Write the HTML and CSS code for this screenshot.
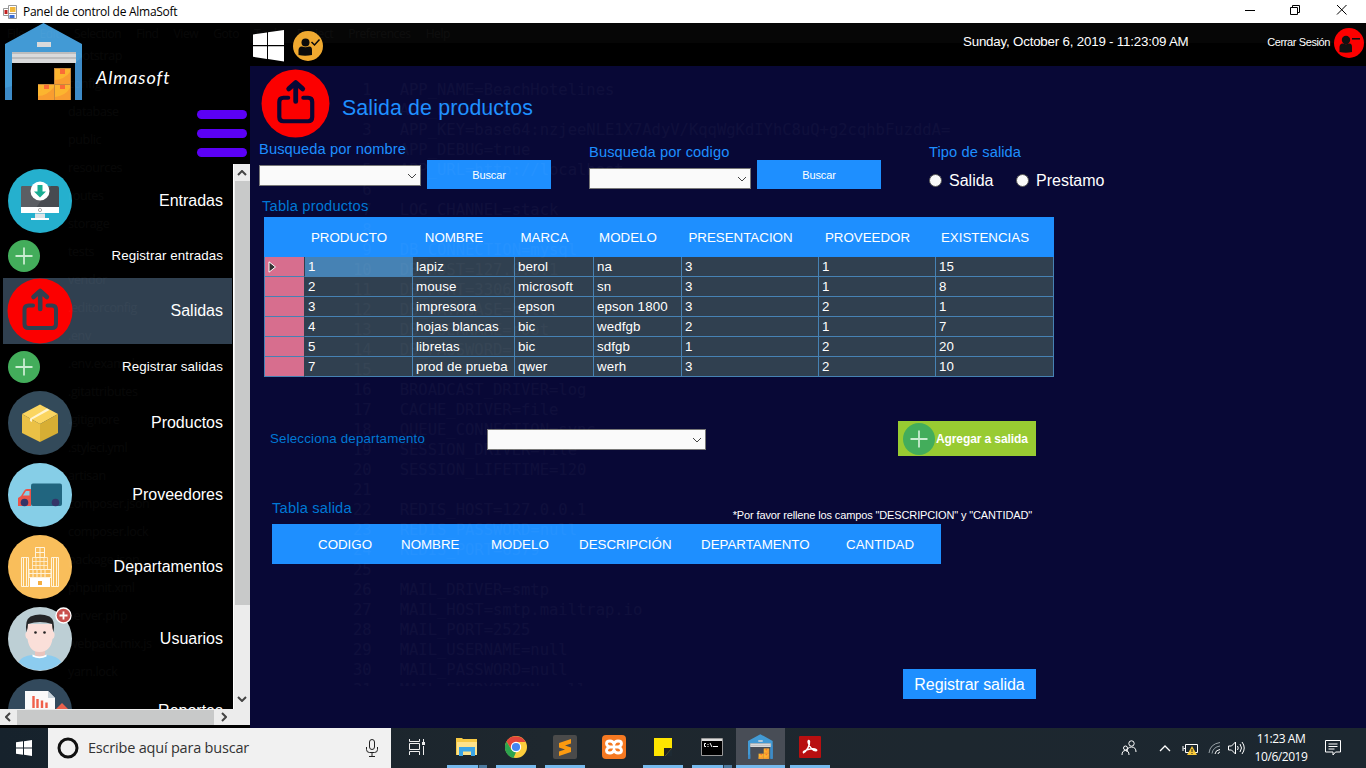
FILE: index.html
```html
<!DOCTYPE html>
<html lang="es">
<head>
<meta charset="utf-8">
<title>Panel de control de AlmaSoft</title>
<link rel="stylesheet" href="styles.css">
</head>
<body>
<svg class="defs" width="0" height="0">
  <defs>
    <symbol id="warehouse" viewBox="0 0 78 77">
      <path fill="#429ad5" d="M0 21 38.500 0 77 21V77H70V29H7V77H0z"/>
      <path fill="#3d8bc8" d="M0 65 7 63V77H0zM70 40l7-6v43h-7z"/>
      <path fill="#d9dadb" d="M32 19h14v5H32zM7 29h64v11H7z"/>
      <path fill="#bcbdbe" d="M7 29h64v2H7zM7 34h64v2H7z"/>
      <path fill="#fcb52f" d="M33 61h16v16H33zM49.500 45H66v32H49.500z"/>
      <path fill="#f99d30" d="M33 73q9 0 16-9v13H33zM50 57q10-1 15-8v12H50zM50 74q10-1 15-9v12H50z"/>
      <path fill="#c8893b" d="M33 61h16v1H33zM49 45h1v32h-1zM50 45h16v1H50zM50 61h16v1H50zM65 45h1v32h-1z"/>
      <path fill="#fa6c37" d="M39 62h5v4h-5zM55 46h5v5h-5zM55 62h5v4h-5z"/>
    </symbol>
    <symbol id="plus" viewBox="0 0 32 32">
      <circle cx="16" cy="16" r="16" fill="#43ad5b"/>
      <path d="M16 7.500v17M7.500 16h17" stroke="#c9ecd0" stroke-width="1.800"/>
    </symbol>
    <symbol id="share" viewBox="0 0 66 66">
      <circle cx="33" cy="33" r="32.500" fill="#fc0000"/>
      <path d="M26 27.500h-4.500q-4 0-4 4v14.500q0 4 4 4h23.500q4 0 4-4v-14.500q0-4-4-4h-4.500" fill="none" stroke="currentColor" stroke-width="4" stroke-linecap="round"/>
      <path d="M33.200 31V14M26.500 19l6.700-6 6.700 6" fill="none" stroke="currentColor" stroke-width="4.600" stroke-linecap="round" stroke-linejoin="round"/>
    </symbol>
    <symbol id="chev" viewBox="0 0 10 6">
      <path d="M1 1l4 4 4-4" fill="none" stroke="currentColor"/>
    </symbol>
  </defs>
</svg>

<div class="titlebar">
  <svg width="14" height="14" viewBox="0 0 14 14">
    <path fill="#fff" stroke="#999" d="M.5 3.500h5v7h-5zM5.500.500h8v8h-8zM5.500 8.500h8v5h-8z"/>
    <path fill="#c02020" d="M1.500 5h3v4h-3z"/><path fill="#f2b93b" d="M7 2h5.500v5H7z"/><path fill="#3a6fd8" d="M6.500 10h5v3h-5z"/>
  </svg>
  <span class="titlebar-text">Panel de control de AlmaSoft</span>
  <svg class="win-controls" width="104" height="12" viewBox="0 0 104 12" fill="none" stroke="#000">
    <path d="M0 6.500h10M45.500 3.500h7v7h-7zM47.500 3V1.500h7v7H53M92 1l9.500 9.500M101.500 1 92 10.500"/>
  </svg>
</div>

<div class="workspace">
  <aside class="sidebar">
    <div class="brand">
      <svg class="brand-logo" width="78" height="77"><use href="#warehouse"/></svg>
      <span class="brand-name">Almasoft</span>
      <div class="burger"><i></i><i></i><i></i></div>
    </div>
    <div class="nav-wrap">
      <nav class="nav">
        <div class="item">
          <svg width="66" height="66" viewBox="0 0 66 66"><circle cx="33" cy="33" r="32" fill="#25b0ce"/>
            <path fill="#474b50" d="M14 20q0-2 2-2h34q2 0 2 2v20H14z"/><path fill="#5b5e63" d="M14 20q0-2 2-2h28L29 40H14z"/>
            <path fill="#fff" d="M14 39h38v6H14zM24 50h18v2H24z"/><path fill="#dde3e6" d="M28 45.500h10V50H28z"/><circle cx="33" cy="42" r="1.600" fill="none" stroke="#aaa"/>
            <circle cx="33" cy="23" r="9.500" fill="#fff"/><path fill="#19ad92" d="M30.500 17h5v6.500H39l-6 6-6-6h3.500z"/></svg>
          <span>Entradas</span>
        </div>
        <div class="item sub"><svg width="32" height="32"><use href="#plus"/></svg><span>Registrar entradas</span></div>
        <div class="item active"><svg width="66" height="66"><use href="#share"/></svg><span>Salidas</span></div>
        <div class="item sub tall"><svg width="32" height="32"><use href="#plus"/></svg><span>Registrar salidas</span></div>
        <div class="item">
          <svg width="66" height="66" viewBox="0 0 66 66"><circle cx="33" cy="33" r="32" fill="#334a5a"/>
            <path fill="#fbd560" d="M33 14.500 51 24 33 34 15 24z"/><path fill="#ebc146" d="M15 24l18 10v18L15 43z"/><path fill="#d7ae34" d="M51 24 33 34v18l18-9z"/>
            <path fill="#fff4d0" d="M23 28.500 40 18.500l2.500 1.500L25 29.500V32l-2-1z"/></svg>
          <span>Productos</span>
        </div>
        <div class="item gap">
          <svg width="66" height="66" viewBox="0 0 66 66"><circle cx="33" cy="33" r="32" fill="#86cee7"/>
            <rect x="24" y="21.500" width="31" height="22.500" rx="2" fill="#21657f"/>
            <path fill="#ea5349" d="M24 27v17H11v-8l3-2 3-5q1-2 3-2z"/><path fill="#86cee7" d="M22.500 29v4.500H16l3-4.500z"/>
            <circle cx="17.500" cy="40.500" r="3.800" fill="#343468"/><circle cx="48.500" cy="40.500" r="3.800" fill="#343468"/></svg>
          <span>Proveedores</span>
        </div>
        <div class="item gap">
          <svg width="66" height="66" viewBox="0 0 66 66"><circle cx="33" cy="33" r="32" fill="#f9be5b"/>
            <g fill="none" stroke="#fff3db"><path d="M28.500 13.500h9v10h-9zM33 13.500v10M28.500 18.500h9"/><path stroke-width=".8" d="M25.500 23.500h15v12h-15zM25.500 27.500h15M25.500 31.500h15M29 23.500v12M33 23.500v12M37 23.500v12"/>
            <path d="M22 35.500h22v8H22zM22 39.500h22M26 35.500v8M30 35.500v8M34 35.500v8M38 35.500v8"/><path d="M14.500 23.500h7v29h-7zM44.500 23.500h7v29h-7zM16.500 23.500v29M19.500 23.500v29M46.500 23.500v29M49.500 23.500v29"/></g>
            <path fill="#fff" d="M23 44h20v9H23z"/><path fill="#f4ae40" d="M31 47h4v4h-4z"/></svg>
          <span>Departamentos</span>
        </div>
        <div class="item gap">
          <svg width="66" height="66" viewBox="0 0 66 66"><circle cx="33" cy="33" r="32" fill="#bdcfd5"/>
            <path fill="#e9c4bd" d="M28 43h10v9H28z"/><path fill="#8cccef" d="M11.500 56q3-6 14-7 7 4 14 0 11 1 15 7A32 32 0 0 1 11.500 56"/>
            <path fill="#fff" d="M25.500 48.500q7 4 14 0v2q-7 3.500-14 0z"/>
            <path fill="#fadfd9" d="M20 18h26v8q2 0 1.500 4-.5 3-2 3-2 12.500-12.500 13T20.500 33q-1.500 0-2-3-.5-4 1.500-4z"/>
            <path fill="#252627" d="M19.500 26q-2-12 4-15.500 9.500-4 19 0 6 3.500 4 15.500-1.500-4-1.500-8-12-4-24 0 0 4-1.500 8"/>
            <circle cx="28.500" cy="26.500" r="1.300" fill="#222"/><circle cx="37.500" cy="26.500" r="1.300" fill="#222"/>
            <circle cx="56.500" cy="9.500" r="7.500" fill="#c9504d" stroke="#fff" stroke-width="1.300"/><path d="M56.500 5.500v8M52.500 9.500h8" stroke="#fff" stroke-width="1.800"/></svg>
          <span>Usuarios</span>
        </div>
        <div class="item gap">
          <svg width="66" height="66" viewBox="0 0 66 66"><circle cx="33" cy="33" r="32" fill="#32495c"/>
            <path fill="#fafafa" d="M18 13h23l7 7v32H18z"/><path fill="#c9d4dc" d="M41 13v7h7z"/>
            <path d="M26.500 18v12M30.500 21v9M35 22.500v7.500M39.500 24.500v5.500" stroke="#f0604a" stroke-width="2.400"/><path fill="#e9614c" d="M49 31l6-6 6 6z"/></svg>
          <span>Reportes</span>
        </div>
      </nav>
      <div class="vscroll"><svg width="10" height="6" class="flip"><use href="#chev"/></svg><i class="vthumb"></i><svg width="10" height="6"><use href="#chev"/></svg></div>
    </div>
    <div class="hscroll"><svg width="10" height="6" class="left"><use href="#chev"/></svg><i class="hthumb"></i><svg width="10" height="6" class="right"><use href="#chev"/></svg></div>
  </aside>

  <main class="main">
    <header class="topbar">
      <svg width="32" height="32" viewBox="0 0 32 32"><path fill="#fff" d="M0 4.500 14 2.500V15H0zM15 2.300 31 0v15H15zM0 16.200h14V29L0 26.800zM15 16.200h16V31.500L15 29z"/></svg>
      <svg class="user-ok" width="30" height="30" viewBox="0 0 30 30"><circle cx="15" cy="15" r="15" fill="#f0a92f"/>
        <circle cx="12.500" cy="11.500" r="4" fill="#0b0b0b"/><path fill="#0b0b0b" d="M5.500 24v-5q.5-4 3.500-3.500 3.500 1.500 7 0 3-.5 3 3.500v5q-7 1.500-13.500 0"/><path d="M18.500 11l3 3 5-5.500" fill="none" stroke="#0b0b0b" stroke-width="1.500"/></svg>
      <span class="datetime">Sunday, October 6, 2019 - 11:23:09 AM</span>
      <span class="logout">Cerrar Sesión</span>
      <svg class="user-out" width="30" height="30" viewBox="0 0 30 30"><circle cx="15" cy="15" r="15" fill="#fd0000"/>
        <circle cx="12" cy="12" r="4.200" fill="#111"/><path fill="#111" d="M5.500 24v-5q.5-4 3.500-3.500 3 1.500 6 0 3-.5 3 3.500v5q-6 1.500-12.500 0"/><path d="M18 10.800h8" stroke="#111" stroke-width="1.600"/></svg>
    </header>

    <section class="content">
      <div class="page-head">
        <svg width="69" height="69"><use href="#share"/></svg>
        <h1>Salida de productos</h1>
      </div>

      <div class="filters">
        <div class="search">
          <label>Busqueda por nombre</label>
          <div class="search-row"><div class="combo"><svg width="10" height="6"><use href="#chev"/></svg></div><button class="btn small">Buscar</button></div>
        </div>
        <div class="search code">
          <label>Busqueda por codigo</label>
          <div class="search-row"><div class="combo"><svg width="10" height="6"><use href="#chev"/></svg></div><button class="btn small">Buscar</button></div>
        </div>
        <div class="kind">
          <label>Tipo de salida</label>
          <div class="radios"><i></i><span>Salida</span><i></i><span>Prestamo</span></div>
        </div>
      </div>

      <div class="caption products-caption">Tabla productos</div>
      <table class="products">
        <colgroup><col class="c0"><col class="c1"><col class="c2"><col class="c3"><col class="c4"><col class="c5"><col class="c6"><col class="c7"></colgroup>
        <thead><tr><th></th><th>PRODUCTO</th><th>NOMBRE</th><th>MARCA</th><th>MODELO</th><th>PRESENTACION</th><th>PROVEEDOR</th><th>EXISTENCIAS</th></tr></thead>
        <tbody>
          <tr><td><svg width="9" height="12" viewBox="0 0 9 12"><path d="M1 .8v10.400L7.500 6z" fill="#333" stroke="#fff"/></svg></td><td class="selected">1</td><td>lapiz</td><td>berol</td><td>na</td><td>3</td><td>1</td><td>15</td></tr>
          <tr><td></td><td>2</td><td>mouse</td><td>microsoft</td><td>sn</td><td>3</td><td>1</td><td>8</td></tr>
          <tr><td></td><td>3</td><td>impresora</td><td>epson</td><td>epson 1800</td><td>3</td><td>2</td><td>1</td></tr>
          <tr><td></td><td>4</td><td>hojas blancas</td><td>bic</td><td>wedfgb</td><td>2</td><td>1</td><td>7</td></tr>
          <tr><td></td><td>5</td><td>libretas</td><td>bic</td><td>sdfgb</td><td>1</td><td>2</td><td>20</td></tr>
          <tr><td></td><td>7</td><td>prod de prueba</td><td>qwer</td><td>werh</td><td>3</td><td>2</td><td>10</td></tr>
        </tbody>
      </table>

      <div class="department">
        <label>Selecciona departamento</label>
        <div class="combo wide"><svg width="10" height="6"><use href="#chev"/></svg></div>
        <button class="btn-add"><svg width="32" height="32"><use href="#plus"/></svg><span>Agregar a salida</span></button>
      </div>

      <div class="output-head"><span class="caption">Tabla salida</span><span class="note">*Por favor rellene los campos "DESCRIPCION" y "CANTIDAD"</span></div>
      <div class="output-table"><span>CODIGO</span><span>NOMBRE</span><span>MODELO</span><span>DESCRIPCIÓN</span><span>DEPARTAMENTO</span><span>CANTIDAD</span></div>
      <button class="btn submit">Registrar salida</button>
    </section>
  </main>

  <div class="see-through" aria-hidden="true">
    <div class="ghost-menu"><span>File</span><span>Edit</span><span>Selection</span><span>Find</span><span>View</span><span>Goto</span><span>Tools</span><span>Project</span><span>Preferences</span><span>Help</span></div>
    <pre class="ghost-tree">bootstrap
config
database
public
resources
routes
storage
tests
vendor
.editorconfig
.env
.env.example
.gitattributes
.gitignore
.styleci.yml
artisan
composer.json
composer.lock
package.json
phpunit.xml
server.php
webpack.mix.js
yarn.lock</pre>
    <pre class="ghost-code"> 1   APP_NAME=BeachHotelines
 2   APP_ENV=local
 3   APP_KEY=base64:nzjeeNLE1X7AdyV/KqqWgKdIYhC8uQ+g2cqhbFuzddA=
 4   APP_DEBUG=true
 5   APP_URL=http://localhost
 6
 7   LOG_CHANNEL=stack
 8
 9   DB_CONNECTION=mysql
10   DB_HOST=127.0.0.1
11   DB_PORT=3306
12   DB_DATABASE=hotel
13   DB_USERNAME=root
14   DB_PASSWORD=
15
16   BROADCAST_DRIVER=log
17   CACHE_DRIVER=file
18   QUEUE_CONNECTION=sync
19   SESSION_DRIVER=file
20   SESSION_LIFETIME=120
21
22   REDIS_HOST=127.0.0.1
23   REDIS_PASSWORD=null
24   REDIS_PORT=6379
25
26   MAIL_DRIVER=smtp
27   MAIL_HOST=smtp.mailtrap.io
28   MAIL_PORT=2525
29   MAIL_USERNAME=null
30   MAIL_PASSWORD=null
31   MAIL_ENCRYPTION=null</pre>
  </div>
</div>

<footer class="taskbar">
  <div class="start"><svg width="16" height="16" viewBox="0 0 16 16"><path fill="#fff" d="M0 2.300 7 1.300V7.500H0zM8 1.200 16 0v7.500H8zM0 8.500h7v6.200l-7-1zM8 8.500h8V16l-8-1.200z"/></svg></div>
  <div class="taskbar-search">
    <svg width="22" height="22" viewBox="0 0 22 22"><circle cx="11" cy="11" r="9" fill="none" stroke="#111" stroke-width="3"/></svg>
    <span>Escribe aquí para buscar</span>
    <svg class="mic" width="12" height="18" viewBox="0 0 12 18" fill="none" stroke="#222"><rect x="3.500" y=".5" width="5" height="10" rx="2.500"/><path d="M.5 8v2.500q0 3 3 3h5q3 0 3-3V8M6 13.500V17M3 17.500h6"/></svg>
  </div>
  <div class="app first"><svg width="18" height="16" viewBox="0 0 18 16" fill="none" stroke="#eee"><path d="M1.500 0v2.500h10V0M1.500 4.500h10v6h-10zM1.500 16v-3.500h10V16M15.500 0v3M15.500 7v9"/><path d="M14 3h3v3h-3z" fill="#eee" stroke="none"/></svg></div>
  <div class="app open multi"><svg width="22" height="20" viewBox="0 0 22 20"><path fill="#f6c944" d="M0 1h6l1 1h14v16H0z"/><path fill="#fde28b" d="M1 5h20v13H1z"/><path fill="#3aa4e6" d="M3 10h16v9h-4v-4.500H7V19H3z"/></svg></div>
  <div class="app open"><svg width="22" height="22" viewBox="0 0 22 22"><circle cx="11" cy="11" r="11" fill="#fccd3c"/><path fill="#e2443b" d="M1.500 5.500A11 11 0 0 1 20.600 6H11L6 13z"/><path fill="#2da34e" d="M1.500 5.500 6.700 14l4.300 2.200L8.500 22A11 11 0 0 1 1.500 5.500"/><circle cx="11" cy="11" r="5.200" fill="#fff"/><circle cx="11" cy="11" r="4.100" fill="#4285f4"/></svg></div>
  <div class="app open"><svg width="24" height="24" viewBox="0 0 24 24"><rect width="24" height="24" rx="2" fill="#4a4a4a"/><path fill="#fb9a10" d="M18 4v4.500L12 10.500l6 2v4.500L6 21v-4.500l6-2-6-2V8z"/></svg></div>
  <div class="app"><svg width="24" height="24" viewBox="0 0 24 24"><rect width="24" height="24" rx="4" fill="#f57922"/><path fill="none" stroke="#fff" stroke-width="2.800" d="M8 12q-3.500-1-3.500-3.500T8 6q3 0 4 3 1-3 4-3 3.500 0 3.500 2.500T16 12q3.500 1 3.500 3.500T16 18q-3 0-4-3-1 3-4 3-3.500 0-3.500-2.500T8 12h8"/></svg></div>
  <div class="app open"><svg width="18" height="18" viewBox="0 0 18 18"><path fill="#ffe500" d="M0 0h18v18H0z"/><path fill="#222" d="M10 10h8l-7 8h-1z"/><path fill="#1e2a33" d="M18 10v8h-7z"/></svg></div>
  <div class="app open multi"><svg width="22" height="18" viewBox="0 0 22 18"><path fill="#000" stroke="#999" d="M.5.500h21v17H.500z"/><path fill="#ddd" d="M1 1h20v2H1z"/><path d="M5 5.500H3.500v3H5M7 6v1M7 8v1M9 5l2 4M12 8.500h5" stroke="#fff" fill="none"/></svg></div>
  <div class="app open current"><svg width="25" height="25"><use href="#warehouse"/></svg></div>
  <div class="app open"><svg width="22" height="22" viewBox="0 0 22 22"><rect width="22" height="22" rx="1" fill="#b80f10"/><path fill="none" stroke="#fff" stroke-width="1.400" d="M4 17c4-2 7-8 6.500-11.500-.5-2-2-1-1.200 1.500C10.500 11 14 15 17 14.800c2-.5 0-2.300-4-2-4 .2-8.500 2-9 3.700"/></svg></div>
  <div class="tray">
    <svg width="16" height="16" viewBox="0 0 16 16" fill="none" stroke="#fff"><circle cx="10.500" cy="3.500" r="2.700"/><path d="M6 12q0-5 4.500-5T15 12"/><circle cx="4.500" cy="8" r="2"/><path d="M1 15q0-4.500 3.500-4.500T8 15"/></svg>
    <svg class="t-chev" width="12" height="7" viewBox="0 0 12 7" fill="none" stroke="#fff"><path d="M1 6l5-5 5 5" stroke-width="1.300"/></svg>
    <svg class="t-batt" width="16" height="14" viewBox="0 0 16 14"><path d="M3.500 3.500h12v8h-12zM1 5v5M1.500 7.500h2" fill="none" stroke="#fff"/><path fill="#f8c838" d="M10 5l5 9H5z"/><path d="M10 8v3M10 12v1" stroke="#222"/></svg>
    <svg class="t-wifi" width="14" height="14" viewBox="0 0 14 14" fill="none"><path stroke="#9aa3a8" d="M1 12Q2 3 12 1.500M4 12.500Q5 6 12 5"/><path stroke="#fff" d="M7 13q.5-4 5-4.500M10 13q0-1.500 2-2"/></svg>
    <svg class="t-vol" width="17" height="14" viewBox="0 0 17 14" fill="none" stroke="#fff"><path d="M.5 5h3l4-4v12l-4-4h-3zM9.500 5q1.500 2 0 4M12 3q3 4 0 8M14 1q4.500 6 0 12"/></svg>
    <div class="clock"><span>11:23 AM</span><span>10/6/2019</span></div>
    <svg class="t-note" width="16" height="16" viewBox="0 0 16 16" fill="none" stroke="#fff"><path d="M.5.500h15v11.500h-5L8 15v-3H.500zM3.500 4h9M3.500 6.500h9M3.500 9h6"/></svg>
  </div>
</footer>
</body>
</html>
```
FILE: styles.css
```css
* { box-sizing: border-box; }
body { margin: 0; width: 1366px; height: 768px; overflow: hidden; display: flex; flex-direction: column; background: #000; color: #fff; font: 13.33px/16px "Liberation Sans", Arial, sans-serif; }
svg { display: block; flex: none; }
.defs { position: absolute; }
button { border: 0; padding: 0; color: #fff; font-family: inherit; }

/* window frame */
.titlebar { height: 23px; flex: none; display: flex; align-items: center; padding: 0 18px 0 3px; background: #fff; color: #000; }
.titlebar-text { margin-left: 6px; font: 12px/16px "Open Sans", "Noto Sans", sans-serif; letter-spacing: -.27px; white-space: nowrap; }
.win-controls { margin: 0 -1px 3px auto; }
.workspace { position: relative; height: 705px; display: flex; overflow: hidden; }

/* sidebar */
.sidebar { width: 250px; height: 702px; flex: none; display: flex; flex-direction: column; background: #000; }
.brand { height: 141px; flex: none; display: grid; grid-template-columns: 91px 1fr 53px; grid-template-rows: 77px 64px; padding-left: 5px; }
.brand-name { align-self: center; padding-top: 30px; font: italic 400 18px/22px Lato, sans-serif; letter-spacing: .9px; }
.burger { grid-column: 3; grid-row: 2; display: flex; flex-direction: column; gap: 10px; padding-top: 10px; }
.burger i { display: block; width: 50px; height: 9px; border-radius: 5px; background: #5b00f5; }
.nav-wrap { height: 545px; display: flex; }
.nav { width: 233px; height: 545px; overflow: hidden; padding-top: 4px; }
.item { display: flex; justify-content: space-between; align-items: center; height: 66px; margin: 0 1px 0 3px; padding: 0 9px 0 4px; font-size: 16px; }
.item.active { background: #304050; color: #fff; }
.item.active svg { color: #304050; }
.item.sub { height: 44px; padding-left: 5px; font-size: 13.33px; letter-spacing: .1px; }
.item.tall { height: 46px; }
.item.gap { margin-top: 6px; }
.vscroll { width: 17px; display: flex; flex-direction: column; align-items: center; padding: 6px 0; background: #ececec; color: #444; border-left: 1px solid #fff; }
.vthumb { width: 15px; height: 424px; margin: 5px 0 91px; background: #c8c9c9; flex: none; }
.flip { transform: rotate(180deg); }
.hscroll { height: 16px; flex: none; display: flex; align-items: center; padding-left: 3px; background: #ececec; color: #444; }
.hthumb { width: 197px; height: 15px; margin: 0 5px 0 4px; background: #c8c9c9; }
.left { transform: rotate(90deg); }
.right { transform: rotate(-90deg); }
.vscroll svg, .hscroll svg { stroke-width: 2; }

/* top bar */
.main { width: 1116px; display: flex; flex-direction: column; background: #080836; }
.topbar { height: 43px; flex: none; display: flex; align-items: center; padding: 2px 2px 0 3px; background: linear-gradient(#060606 20px, #000 20px); }
.user-ok { margin-left: 8px; }
.datetime { margin-left: 640px; margin-top: -8px; white-space: nowrap; width: 227px; letter-spacing: -.2px; }
.logout { margin: -7px 4px 0 auto; font-size: 11px; letter-spacing: -.4px; white-space: nowrap; }
.user-out { margin-top: -5px; }

/* page content */
.content { padding-left: 9px; display: flex; flex-direction: column; align-items: flex-start; }
.page-head { height: 74px; display: flex; align-items: center; padding: 0 0 0 2px; color: #080836; }
.page-head h1 { margin: 9px 0 0 12px; font-size: 21.33px; line-height: 26px; font-weight: 400; letter-spacing: .13px; color: #1e8fff; }
label { display: block; font-size: 14.67px; letter-spacing: .1px; line-height: 18px; color: #1e8fff; white-space: nowrap; }
.filters { height: 57px; display: flex; }
.search { width: 330px; }
.code label, .kind label { padding-top: 3px; }
.search-row { display: flex; gap: 6px; padding-top: 2px; }
.code .search-row { padding-top: 0; margin-top: -1px; }
.combo { width: 162px; height: 21px; margin-top: 5px; display: flex; align-items: center; justify-content: flex-end; padding-right: 3px; border: 1px solid #777; background: #fafafa; color: #444; }
.code .combo { margin-top: 8px; }
.btn { background: #1e8fff; }
.btn.small { width: 124px; height: 29px; font-size: 11px; letter-spacing: -.1px; }
.kind { width: 200px; padding-left: 10px; }
.radios { display: flex; align-items: center; height: 20px; margin-top: 9px; font-size: 16px; }
.radios i { width: 13px; height: 13px; border: 1px solid #555; border-radius: 50%; background: #fafafa; }
.radios span { width: 67px; padding-left: 7px; margin-right: 7px; }
.radios span { padding-top: 1px; }
.caption { color: #0078d4; font-size: 14.67px; letter-spacing: .2px; line-height: 18px; }
.products-caption { padding-left: 3px; height: 20px; }

.products { width: 790px; height: 160px; margin-left: 5px; border-collapse: separate; table-layout: fixed; border-spacing: 0; }
.c0 { width: 41px; } .c1 { width: 108px; } .c2 { width: 102px; } .c3 { width: 79px; } .c4 { width: 88px; } .c5 { width: 137px; } .c6 { width: 117px; } .c7 { width: 118px; }
.products th { height: 40px; padding: 1px 20px 0 0; background: #1e8fff; font-weight: 400; }
.products td { height: 20px; padding: 1px 0 0 3px; line-height: 18px; letter-spacing: .1px; background: #304050; border: solid #4682b4; border-width: 0 1px 1px 0; white-space: nowrap; }
.products td:first-child { background: #d76e8e; border-left: 1px solid #4682b4; border-right-color: #304050; }
.products td.selected { background: #4682b4; }

.department { display: flex; align-items: center; height: 35px; margin: 44px 0 0 11px; }
.department label { width: 217px; color: #0078d4; font-size: 13.33px; letter-spacing: .17px; }
.combo.wide { width: 219px; margin: 2px 192px 0 0; }
.btn-add { width: 138px; height: 35px; display: flex; align-items: center; padding-left: 5px; background: #98cb32; font-size: 12px; font-weight: 700; letter-spacing: -.1px; white-space: nowrap; }
.btn-add span { margin-left: 1px; }
.output-head { height: 26px; width: 760px; display: flex; justify-content: space-between; margin: 42px 0 0 13px; padding-top: 1px; }
.note { font-size: 11px; letter-spacing: -.13px; padding-top: 8px; white-space: nowrap; }
.output-table { width: 669px; height: 40px; margin-left: 13px; padding: 1px 0 0 46px; display: grid; grid-template-columns: 83px 90px 88px 122px 145px auto; align-items: center; background: #1e8fff; }
.submit { width: 133px; height: 30px; margin: 105px 0 0 644px; padding-top: 1px; font-size: 16px; letter-spacing: -.05px; }

/* editor window visible behind the translucent panel */
.see-through { position: absolute; inset: 0; color: #fff; opacity: .026; pointer-events: none; }
.see-through pre { margin: 0; position: absolute; }
.ghost-menu { display: flex; gap: 15px; padding: 2px 7px; font: 12px/18px "Open Sans", sans-serif; letter-spacing: -.4px; }
.ghost-tree { left: 68px; top: 19px; font: 12.5px/28px "Open Sans", sans-serif; letter-spacing: -.35px; }
.ghost-code { left: 353px; top: 57px; height: 606px; overflow: hidden; font: 15.5px/20px "DejaVu Sans Mono", monospace; }

/* taskbar */
.taskbar { height: 40px; flex: none; display: flex; background: linear-gradient(90deg, #16222c, #1e272e 40%, #1c2730); }
.start { width: 48px; display: grid; place-items: center; }
.taskbar-search { width: 343px; display: flex; align-items: center; padding: 0 13px 0 9px; background: #f1f1f1; color: #333; font: 14.5px/20px "Open Sans", "Noto Sans", sans-serif; letter-spacing: -.2px; white-space: nowrap; }
.taskbar-search span { margin-left: 9px; }
.mic { margin-left: auto; }
.app { width: 49px; display: grid; place-items: center; border-bottom: 3px solid transparent; background-clip: padding-box; }
.app.first { width: 51px; }
.app.open { background: linear-gradient(#76b9ed, #76b9ed) center bottom / 40px 3px no-repeat; border-bottom: 0; padding-bottom: 3px; }
.app.multi { background: linear-gradient(90deg, #76b9ed 31px, #283a48 31px 32px, #4d7ba0 32px) center bottom / 40px 3px no-repeat; }
.app.current { background: linear-gradient(#76b9ed, #76b9ed) center bottom / 100% 3px no-repeat #484d56; }
.tray { margin-left: auto; display: flex; align-items: center; padding-right: 25px; }
.t-chev { margin-left: 22px; }
.t-batt { margin-left: 11px; }
.t-wifi { margin-left: 10px; }
.t-vol { margin-left: 6px; }
.clock { width: 64px; margin: 0 12px 0 4px; display: flex; flex-direction: column; align-items: center; font: 12px/18px "Open Sans", sans-serif; letter-spacing: -.45px; white-space: nowrap; }
```
